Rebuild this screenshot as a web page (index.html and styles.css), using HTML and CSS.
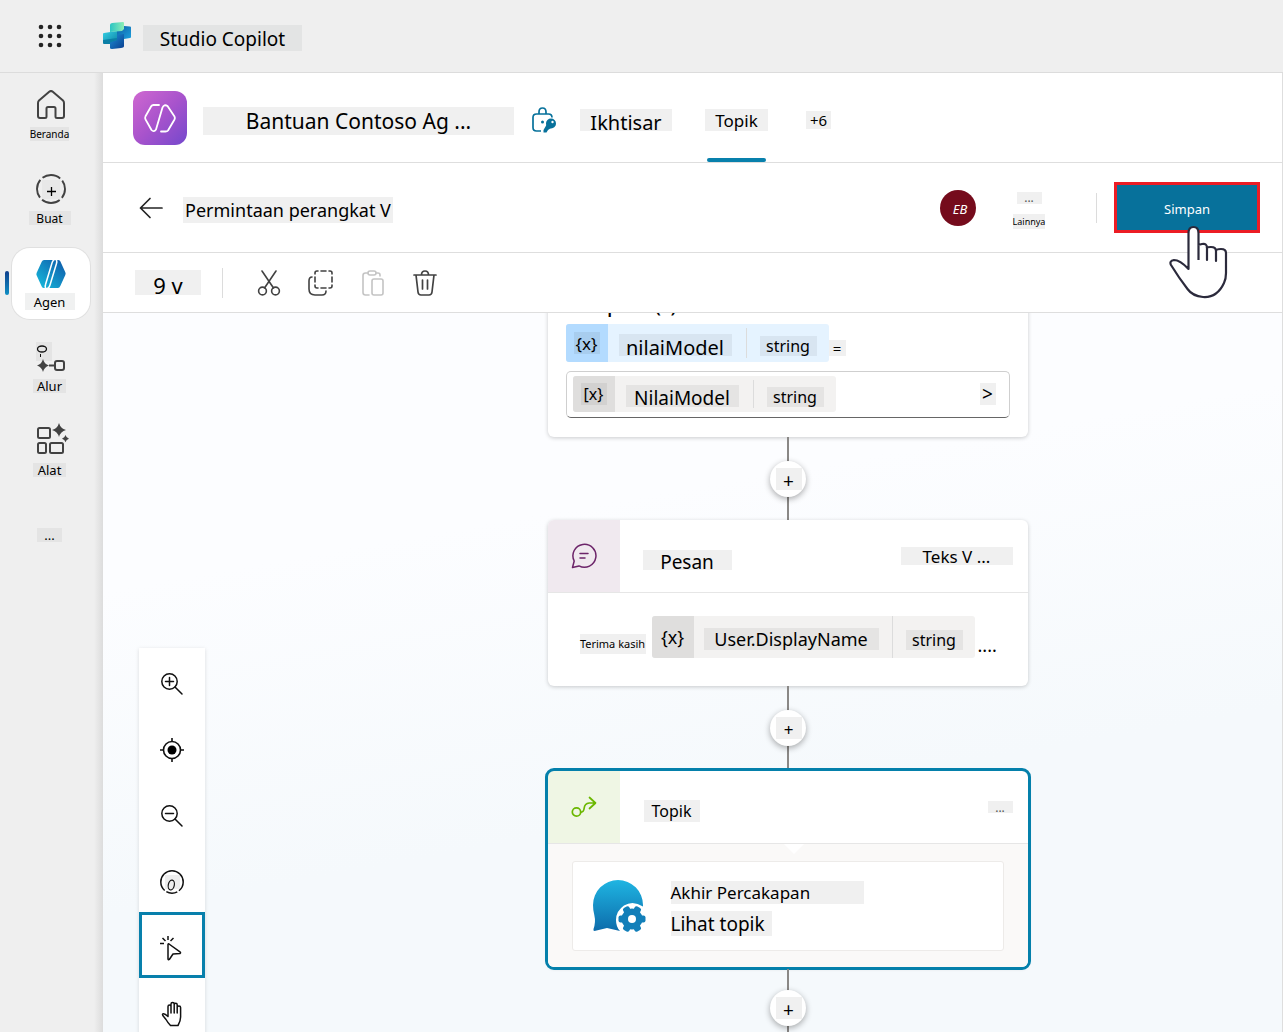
FILE: index.html
```html
<!DOCTYPE html>
<html lang="id">
<head>
<meta charset="utf-8">
<meta name="viewport" content="width=device-width, initial-scale=1">
<title>Studio Copilot</title>
<link rel="stylesheet" href="styles.css">
</head>
<body>
<div class="app">
  <header class="topbar">
    <button class="icon-button" type="button" aria-label="Peluncur aplikasi">
      <svg width="24" height="24" viewBox="0 0 24 24" fill="#242424"><circle cx="3" cy="3" r="2.3"/><circle cx="12" cy="3" r="2.3"/><circle cx="21" cy="3" r="2.3"/><circle cx="3" cy="12" r="2.3"/><circle cx="12" cy="12" r="2.3"/><circle cx="21" cy="12" r="2.3"/><circle cx="3" cy="21" r="2.3"/><circle cx="12" cy="21" r="2.3"/><circle cx="21" cy="21" r="2.3"/></svg>
    </button>
    <svg class="logo" width="30" height="28" viewBox="0 0 30 28" aria-hidden="true">
      <defs>
        <linearGradient id="lg1" x1="0" y1="0" x2="1" y2="0"><stop offset="0" stop-color="#2bc4c4"/><stop offset="1" stop-color="#8deeb4"/></linearGradient>
        <linearGradient id="lg2" x1="0" y1="0" x2="1" y2="1"><stop offset="0" stop-color="#0f5fa8"/><stop offset="1" stop-color="#1da0dc"/></linearGradient>
        <linearGradient id="lg3" x1="0" y1="0" x2="1" y2="1"><stop offset="0" stop-color="#1c8fd6"/><stop offset="1" stop-color="#0a3e8f"/></linearGradient>
        <linearGradient id="lg4" x1="0" y1="0" x2="1" y2="1"><stop offset="0" stop-color="#35d0e4"/><stop offset="1" stop-color="#0e86a8"/></linearGradient>
      </defs>
      <path d="M15 6l7-2 6 .5q1 0 1 1V15q0 1-1 1l-6 1h-7z" fill="url(#lg2)"/>
      <path d="M8 18l7-5 7-1v12q0 1-1 1.500l-2 .5-9 1q-2 0-2-1z" fill="url(#lg3)"/>
      <path d="M1 12q0-1 1-1l13-2v9l-7 2-6 1q-1 0-1-1z" fill="url(#lg4)"/>
      <path d="M1 18l14-2v2l-7 2.500v1.500l-6 0q-1 0-1-1z" fill="#0b7fa6"/>
      <path d="M8 3q0-1.500 2-2L21 0q1 0 1 1v6l-2 2-12 1z" fill="url(#lg1)"/>
    </svg>
    <h1 class="chip product t19">Studio Copilot</h1>
  </header>

  <div class="workspace">
    <nav class="rail" aria-label="Utama">
      <a class="rail-item" href="#beranda">
        <svg width="32" height="32" viewBox="0 0 32 32" fill="none" stroke="#424242" stroke-width="2" stroke-linejoin="round"><path d="M3 13q0-1.500 1-2.500L14.500 1.600q1.500-1.200 3 0L28 10.500q1 1 1 2.500v13q0 2-2 2h-5q-1.500 0-1.500-1.500v-8q0-1.500-1.500-1.500h-6q-1.500 0-1.500 1.500v8Q11.500 28 10 28H5q-2 0-2-2z"/></svg>
        <span class="chip t10">Beranda</span>
      </a>
      <a class="rail-item" href="#buat">
        <svg width="32" height="32" viewBox="0 0 32 32" fill="none" stroke="#424242"><path d="M7 6h18v19H7z" fill="#e8e8e8" stroke="none"/><circle cx="16" cy="15" r="14" stroke-width="1.900" stroke-dasharray="19 3" stroke-dashoffset="9.500"/><path d="M12 17.500h9M16.500 13v9" stroke="#000" stroke-width="1.300"/></svg>
        <span class="chip wide t12">Buat</span>
      </a>
      <a class="rail-item active" href="#agen" aria-current="page">
        <svg width="32" height="32" viewBox="0 0 32 32"><defs><linearGradient id="ag" x1="1" y1="0" x2="0" y2="1"><stop offset="0" stop-color="#0f57a8"/><stop offset="1" stop-color="#16bede"/></linearGradient></defs><path d="M9 2h14q1.500 0 2.300 1.300l5 11q.7 1.200 0 2.700l-5 11Q24.500 30 23 30H9q-1.500 0-2.300-1.600l-5-11q-.7-1.200 0-2.700l5-11Q7.500 2 9 2z" fill="url(#ag)"/><path d="M11.500 31q-2-1.500-1-4.500L17 5q1.200-4 4.500-4M20.500 1q2 1.500 1 4.500L15 27q-1.200 4-4.500 4" fill="none" stroke="#fff" stroke-width="1.500"/></svg>
        <span class="chip wider t13">Agen</span>
      </a>
      <a class="rail-item" href="#alur">
        <svg width="32" height="32" viewBox="0 0 32 32"><path d="M1 0h16v19H1z" fill="#e4e4e4"/><ellipse cx="7" cy="7" rx="4.500" ry="3" fill="none" stroke="#111" stroke-width="1.300"/><path d="M5.500 12v3" stroke="#111"/><path d="M8 17q1.200 5 6 6.500-4.800 1.500-6 6.500-1.200-5-6-6.500 4.800-1.500 6-6.500z" fill="#424242"/><path d="M14 23.500h6" stroke="#424242" stroke-width="2"/><rect x="20" y="19" width="9" height="9" rx="2" fill="none" stroke="#424242" stroke-width="2"/></svg>
        <span class="chip t13">Alur</span>
      </a>
      <a class="rail-item" href="#alat">
        <svg width="32" height="32" viewBox="0 0 32 32" fill="none" stroke="#424242" stroke-width="2" overflow="visible"><rect x="3" y="2" width="12" height="10" rx="1.500"/><rect x="3" y="17" width="8" height="10" rx="1.500"/><rect x="15" y="17" width="13" height="10" rx="1.500"/><path d="M24-3q1.500 5.500 7 7-5.500 1.500-7 7-1.500-5.500-7-7 5.500-1.500 7-7zM30.500 9q.7 2.800 3.500 3.700-2.800.8-3.500 3.600-.7-2.800-3.500-3.600 2.800-.9 3.500-3.700z" fill="#424242" stroke="none"/></svg>
        <span class="chip t13">Alat</span>
      </a>
      <button class="rail-item more" type="button" aria-label="Lainnya"><span class="chip t13">...</span></button>
    </nav>

    <main class="main">
      <div class="agent-header">
        <svg class="agent-icon" width="54" height="54" viewBox="0 0 54 54" aria-hidden="true"><defs><linearGradient id="pu" x1="0" y1="0" x2="1" y2="1"><stop offset="0" stop-color="#cf68d0"/><stop offset=".5" stop-color="#a853cc"/><stop offset="1" stop-color="#7448cc"/></linearGradient></defs><rect width="54" height="54" rx="12" fill="url(#pu)"/><g fill="none" stroke="#fff" stroke-width="1.800" stroke-linecap="round" stroke-linejoin="round"><path d="M26 14h-5.500q-1.500 0-2.300 1.300l-5.700 10q-.8 1.500 0 3L18.500 39q2.300 2.600 4.500-.5l6.500-22q1.600-3.500 5-1.500l7 10.500q.8 1.500 0 3L35 39.500q-.8 1-2.500 1H28"/></g></svg>
        <h2 class="chip agent-name t21">Bantuan Contoso Ag ...</h2>
        <svg class="lock" width="26" height="28" viewBox="0 0 26 28" fill="none" stroke="#07719b" stroke-width="1.700"><path d="M8 8V6q0-4 3.500-4T15 6v2M10 25H5.500Q2 25 2 21.500v-10Q2 8 5.500 8h12Q21 8 21 11.500"/><circle cx="11.500" cy="16" r="1.500" fill="#07719b" stroke="none"/><g fill="#07719b" stroke="none"><circle cx="20" cy="17.500" r="5"/><path d="M16 18l4 4-3 2-1.500 2.500h-3V24z"/></g><circle cx="21.500" cy="16" r="1.200" fill="#fff" stroke="none"/></svg>
        <nav class="tabs" aria-label="Agen">
          <a class="tab first" href="#ikhtisar"><span class="chip overview t20 low">Ikhtisar</span></a>
          <a class="tab selected" href="#topik" aria-current="page"><span class="chip t17">Topik</span></a>
          <a class="tab last" href="#lagi"><span class="chip t15">+6</span></a>
        </nav>
      </div>

      <div class="topic-header">
        <button class="icon-button back" type="button" aria-label="Kembali"><svg width="24" height="22" viewBox="0 0 24 22" fill="none" stroke="#242424" stroke-width="1.700" stroke-linecap="round" stroke-linejoin="round"><path d="M23 11H1.500M11 1.500L1.500 11l9.500 9.500"/></svg></button>
        <h3 class="chip topic-name t18">Permintaan perangkat V</h3>
        <span class="avatar">EB</span>
        <button class="more-menu" type="button"><span class="chip dots">...</span><span class="chip t9">Lainnya</span></button>
        <span class="divider"></span>
        <div class="save-wrap">
          <button class="save" type="button">Simpan</button>
          <svg class="pointer" width="60" height="74" viewBox="0 0 60 74" aria-hidden="true"><path d="M19.500 44V8Q20 2 24.500 2T29 8v27V22q0-3 4-3t5 4v12V24q0-2.500 4-2.500t5 4V36v-9q0-3 4.500-3t5 4.500V48q0 13-7 18-14 9-26 0Q10 53 2 40q-2-4 3-5 6 0 14.500 9z" fill="#fff"/><path d="M29.500 35V8q0-6-5-6t-5 6v36Q11 35 5 35q-5 1-3 5 8 13 16.500 24 5 7 15.500 8 14 1 21-14 2-4 2-10V28q0-4-5-4t-5 2v10-10q0-4-5-4t-4 1v12-12q0-5-5-4l-4 1" fill="none" stroke="#2b2a3c" stroke-width="2.200" stroke-linejoin="round"/></svg>
        </div>
      </div>

      <div class="toolbar">
        <span class="chip count t22 low">9 v</span>
        <span class="divider"></span>
        <button class="icon-button" type="button" aria-label="Potong"><svg width="28" height="28" viewBox="0 0 28 28" fill="none" stroke="#424242" stroke-width="1.600" stroke-linecap="round"><path d="M7 2l11.500 17M21 2L9.500 19"/><circle cx="7.500" cy="22" r="3.900"/><circle cx="20.500" cy="22" r="3.900"/></svg></button>
        <button class="icon-button" type="button" aria-label="Salin"><svg width="28" height="28" viewBox="0 0 28 28" fill="none" stroke="#424242" stroke-width="1.600" stroke-linecap="round"><path d="M8 5V4q0-2 2-2h1M14 2h5M22 2h1q2 0 2 2v1M25 8v5M25 16v1q0 2-2 2h-1M19 19h-5M11 19h-1q-2 0-2-2v-1M8 13V8M5 8q-3 0-3 4v8q0 6 6 6h7q4 0 4-4"/></svg></button>
        <button class="icon-button" type="button" aria-label="Tempel" disabled><svg width="28" height="28" viewBox="0 0 28 28" fill="none" stroke="#c4c4c4" stroke-width="1.600" stroke-linecap="round"><path d="M9 4H6.500Q4 4 4 6.500v17Q4 26 6.500 26H10M17 4h2q2 0 2 2v1"/><rect x="9" y="2" width="8" height="4" rx="2"/><rect x="13" y="10" width="11" height="16" rx="2"/></svg></button>
        <button class="icon-button" type="button" aria-label="Hapus"><svg width="28" height="28" viewBox="0 0 28 28" fill="none" stroke="#424242" stroke-width="1.700" stroke-linecap="round"><path d="M3 6h22M10.500 6q0-4 3.500-4t3.500 4M5 6l2 17q.4 3 3 3h8q2.600 0 3-3l2-17M11.500 11v9M16.500 11v9"/></svg></button>
      </div>

      <div class="canvas">
        <div class="zoombar" role="toolbar" aria-label="Kanvas">
          <button type="button" aria-label="Perbesar"><svg width="24" height="24" viewBox="0 0 24 24" fill="none" stroke="#111" stroke-width="1.500" stroke-linecap="round"><circle cx="9.500" cy="9.500" r="7.700"/><path d="M15 15l7 7M5.500 9.500h8M9.500 5.500v8"/></svg></button>
          <button type="button" aria-label="Pusatkan"><svg width="24" height="24" viewBox="0 0 24 24" fill="none" stroke="#111" stroke-width="1.600"><circle cx="12" cy="12" r="8.500"/><circle cx="12" cy="12" r="4.500" fill="#000" stroke="none"/><path d="M12 0v4M12 20v4M0 12h4M20 12h4"/></svg></button>
          <button type="button" aria-label="Perkecil"><svg width="24" height="24" viewBox="0 0 24 24" fill="none" stroke="#111" stroke-width="1.500" stroke-linecap="round"><circle cx="9.500" cy="9.500" r="7.700"/><path d="M15 15l7 7M5.500 9.500h8"/></svg></button>
          <button type="button" aria-label="Atur ulang"><svg width="24" height="24" viewBox="0 0 24 24" fill="none" stroke="#111" stroke-width="1.500"><path d="M5 5h15v14H5z" fill="#ededed" stroke="none"/><circle cx="12" cy="12" r="11.200" stroke-dasharray="10 2 11.400 2 45"/><ellipse cx="11.300" cy="15" rx="3" ry="5" stroke-width="1.200" transform="rotate(12 11 15)"/></svg></button>
          <button class="picked" type="button" aria-label="Pilih" aria-pressed="true"><svg width="24" height="26" viewBox="0 0 24 26" fill="none" stroke="#111" stroke-width="1.500" stroke-linejoin="round"><path d="M8 9.500v14.500q.3 1.300 1.300.5L13 19l7-.5q1-.5.300-1.300L9 9q-1-.5-1 .5zM8 1v4M2.500 3l3 3M13.500 3l-3 3M0 8.500h4"/></svg></button>
          <button type="button" aria-label="Geser"><svg width="24" height="26" viewBox="0 0 24 26" fill="none" stroke="#111" stroke-width="1.500" stroke-linecap="round" stroke-linejoin="round"><path d="M8 15V5.500Q8 4 9.500 4T11 5.500V12M11 12V3q0-1.500 1.600-1.500T14.200 3v9M14.200 12V3.800q0-1.500 1.500-1.500t1.500 1.500V12M17.200 12V6.500q0-1.500 1.700-1.500t1.700 1.500V16q0 4-2.600 8.500h-7.500Q8 22 6 18.500L2.800 14.500q-.8-1.500.7-1.700Q5 12.700 8 15.500"/></svg></button>
        </div>

        <div class="flow">
          <section class="card variable-card">
            <h4 class="cut-title">Inputs (s)</h4>
            <div class="variable-row">
              <span class="pill blue"><span class="pill-icon"><span class="chip t17">{x}</span></span><span class="pill-name"><span class="chip var-name t20 low">nilaiModel</span></span><span class="pill-type"><span class="chip t16">string</span></span></span><span class="chip equals t15">=</span>
            </div>
            <div class="value-field">
              <span class="pill"><span class="pill-icon"><span class="chip t16">[x}</span></span><span class="pill-name"><span class="chip var-name t19 low">NilaiModel</span></span><span class="pill-type"><span class="chip t16">string</span></span></span>
              <button class="chip expand t19" type="button">&gt;</button>
            </div>
          </section>
          <div class="connector"><button type="button" aria-label="Tambah simpul"><span class="chip t19">+</span></button></div>

          <section class="card">
            <div class="card-head">
              <span class="card-icon purple"><svg width="26" height="26" viewBox="0 0 26 26" fill="none" stroke="#6c2469" stroke-width="1.500" stroke-linecap="round" stroke-linejoin="round"><path d="M1.500 24.500L3.200 18A11.500 11.500 0 1 1 8 22.900zM9 10.500h8M9 15h5"/></svg></span>
              <h4 class="chip message-title t19 low">Pesan</h4>
              <button class="chip text-menu t17" type="button">Teks V ...</button>
            </div>
            <div class="message-body">
              <span class="chip thanks t11">Terima kasih</span>
              <span class="pill tall"><span class="pill-icon t18">{x}</span><span class="pill-name"><span class="chip user-name t18">User.DisplayName</span></span><span class="pill-type"><span class="chip t16">string</span></span></span><span class="trail t18">....</span>
            </div>
          </section>
          <div class="connector"><button type="button" aria-label="Tambah simpul"><span class="chip t17">+</span></button></div>

          <section class="card chosen">
            <div class="card-head">
              <span class="card-icon green"><svg width="26" height="22" viewBox="0 0 26 22" fill="none" stroke="#6bb700" stroke-width="1.700" stroke-linecap="round" stroke-linejoin="round"><circle cx="5.500" cy="16" r="4.200"/><path d="M9.700 16q3 .5 3.500-4t5-5H24M18.500 1.500L24.500 7 18.500 12.500"/></svg></span>
              <h4 class="chip topic-title t16">Topik</h4>
              <button class="chip dots push" type="button">...</button>
            </div>
            <div class="topic-body">
              <div class="topic-tile">
                <svg width="54" height="54" viewBox="0 0 54 54" aria-hidden="true"><defs><linearGradient id="bl" x1="0" y1="0" x2="0" y2="1"><stop offset="0" stop-color="#1fb5e2"/><stop offset="1" stop-color="#0d6cab"/></linearGradient></defs><path d="M1.500 52q-1.500 0-1-2 2.500-7 .8-14Q0 31 0 26a25 25 0 0 1 50 0v1.500Q40 21 31 26.500 23 32 23 41q0 7 4 11l-13-3z" fill="url(#bl)"/><g fill="#127fb9"><circle cx="39" cy="40" r="10.500"/><rect x="35.500" y="26.500" width="7" height="27" rx="2" transform="rotate(30 39 40)"/><rect x="35.500" y="26.500" width="7" height="27" rx="2" transform="rotate(90 39 40)"/><rect x="35.500" y="26.500" width="7" height="27" rx="2" transform="rotate(150 39 40)"/></g><circle cx="39" cy="40" r="4" fill="#fff"/></svg>
                <div class="topic-text"><span class="chip end-name t17">Akhir Percakapan</span><a class="chip view-link t19" href="#lihat">Lihat topik</a></div>
              </div>
            </div>
          </section>
          <div class="connector short"><button type="button" aria-label="Tambah simpul"><span class="chip t19">+</span></button></div>
        </div>
      </div>
    </main>
  </div>
</div>
</body>
</html>
```

FILE: styles.css
```css
* { box-sizing: border-box; }

body {
  margin: 0;
  font-family: "Noto Sans", "Open Sans", sans-serif;
  color: #000;
  background: #efefef;
}

h1, h2, h3, h4 { margin: 0; font-weight: 400; }
a { color: inherit; text-decoration: none; }
button { border: 0; padding: 0; background: none; font: inherit; color: inherit; }
svg { display: block; flex: none; }

.t9 { font-size: 9px; }
.t10 { font-size: 10px; }
.t11 { font-size: 11px; }
.t12 { font-size: 12px; }
.t13 { font-size: 13px; }
.t15 { font-size: 15px; }
.t16 { font-size: 16px; }
.t17 { font-size: 17px; }
.t18 { font-size: 18px; }
.t19 { font-size: 19px; }
.t20 { font-size: 20px; }
.t21 { font-size: 21px; }
.t22 { font-size: 22px; }

/* Tinted label used throughout */
.chip {
  display: inline-flex;
  flex: none;
  align-items: center;
  justify-content: center;
  height: 22px;
  background: #f0f0f0;
  white-space: nowrap;
}
.chip.low { padding-top: 4px; }

.app { display: flex; flex-direction: column; height: 100vh; overflow: hidden; }

.topbar {
  display: flex;
  flex: none;
  align-items: center;
  height: 73px;
  padding-left: 38px;
  border-bottom: 1px solid #dcdcdc;
}
.icon-button { display: flex; align-items: center; justify-content: center; }
.logo { margin: 0 11px 0 40px; }
.product { width: 159px; height: 26px; margin-top: 4px; padding-top: 2px; background: #e3e4e4; }

.workspace { display: flex; flex: 1; min-height: 0; }

.rail {
  display: flex;
  flex: none;
  flex-direction: column;
  gap: 13px;
  width: 103px;
  padding: 7px 13px 0 12px;
  background: linear-gradient(to right, #efefef 94px, #dcdcdc);
}
.rail-item {
  position: relative;
  display: flex;
  flex: none;
  flex-direction: column;
  align-items: center;
  gap: 5px;
  height: 71px;
  padding: 10px 3px 0 0;
  border-radius: 18px;
}
.rail-item svg { margin-left: 2px; }
.rail-item .chip { height: 14px; min-width: 33px; background: #e4e4e4; }
.rail-item .wide { min-width: 42px; }
.rail-item .wider { min-width: 50px; height: 17px; margin-top: -2px; background: #f0f1f1; }
.rail-item.active { background: #fff; box-shadow: 0 0 0 1px #e0e0e0; }
.rail-item.active::before {
  content: "";
  position: absolute;
  left: -7px;
  top: 23px;
  width: 4px;
  height: 24px;
  border-radius: 2px;
  background: linear-gradient(#0f3f8c, #0f8fc4);
}
.rail-item.more { padding-top: 28px; }
.rail-item.more .chip { min-width: 25px; }

.main {
  display: flex;
  flex: 1;
  flex-direction: column;
  min-width: 0;
  background: #fff;
  border-right: 1px solid #dedede;
}

.agent-header {
  display: flex;
  flex: none;
  align-items: center;
  height: 90px;
  padding-left: 30px;
  border-bottom: 1px solid #dedede;
}
.agent-name { width: 311px; height: 28px; margin: 6px 17px 0 16px; }
.lock { margin-top: 4px; }
.tabs { display: flex; align-self: stretch; }
.tab { display: flex; align-items: center; padding-top: 5px; }
.tab.first { margin: 0 33px 0 23px; }
.tab.last { margin-left: 38px; }
.tab.last .chip { height: 18px; width: 25px; }
.overview { width: 92px; }
.tab.selected { position: relative; }
.tab.selected .chip { width: 63px; }
.tab.selected::after {
  content: "";
  position: absolute;
  left: 2px;
  right: 2px;
  bottom: 0;
  height: 4px;
  border-radius: 2px;
  background: #0880ac;
}

.topic-header {
  display: flex;
  flex: none;
  align-items: center;
  height: 90px;
  padding: 0 22px 0 36px;
  border-bottom: 1px solid #dedede;
}
.topic-name { width: 210px; height: 26px; margin: 4px auto 0 20px; }
.avatar {
  display: flex;
  align-items: center;
  justify-content: center;
  width: 36px;
  height: 36px;
  padding: 2px 0 0 4px;
  border-radius: 50%;
  background: #750b1c;
  color: #fff;
  font-size: 13px;
  font-style: italic;
}
.more-menu {
  display: flex;
  flex-direction: column;
  align-items: center;
  gap: 10px;
  width: 36px;
  margin: 5px 49px 0 35px;
}
.more-menu .t9 { height: 15px; }
.chip.dots { width: 25px; height: 12px; font-size: 12px; color: #555; }
.divider { flex: none; width: 1px; height: 30px; background: #dcdcdc; }
.save-wrap { position: relative; margin-left: 17px; }
.save {
  display: block;
  width: 146px;
  height: 51px;
  padding-top: 3px;
  border: 3px solid #ec1c24;
  background: #07719b;
  color: #fff;
  font-size: 13px;
}
.pointer { position: absolute; left: 55px; top: 43px; z-index: 2; }

.toolbar {
  display: flex;
  flex: none;
  align-items: center;
  height: 60px;
  padding-left: 32px;
  border-bottom: 1px solid #dedede;
}
.count { width: 66px; height: 25px; margin-right: 21px; }
.toolbar .icon-button { margin-left: 24px; }
.toolbar .divider + .icon-button { margin-left: 32px; }

.canvas {
  display: flex;
  flex: 1;
  align-items: flex-start;
  min-height: 0;
  overflow: hidden;
  background: linear-gradient(170deg, #fcfdff 30%, #f5f9fc 65%);
}

.zoombar {
  flex: none;
  width: 66px;
  margin: 335px 88px 0 36px;
  background: #fff;
  box-shadow: 0 1px 4px #0002;
}
.zoombar button {
  display: flex;
  align-items: center;
  justify-content: center;
  width: 66px;
  height: 66px;
  padding-top: 6px;
}
.zoombar .picked { border: 3px solid #0880ac; }

.flow { display: flex; flex: 1; flex-direction: column; align-items: center; }

.card {
  width: 480px;
  border-radius: 6px;
  background: #fff;
  box-shadow: 0 1px 4px #0003;
}
.card-head { display: flex; align-items: center; height: 73px; padding-right: 15px; border-bottom: 1px solid #e6e6e6; }
.card-icon {
  display: flex;
  align-items: center;
  justify-content: center;
  align-self: stretch;
  width: 72px;
}
.purple { background: #f0e9ef; border-radius: 6px 0 0 0; }
.green { background: #eff6e4; border-radius: 6px 0 0 0; }

.variable-card { margin-top: -22px; padding: 0 18px 19px; }
.cut-title { height: 33px; padding-left: 22px; font-size: 20px; line-height: 27px; font-weight: 500; }
.variable-row { display: flex; align-items: center; margin-bottom: 9px; }
.pill { display: inline-flex; flex: none; height: 38px; border-radius: 3px; background: #f3f2f1; }
.pill .chip { background: #e5e4e3; }
.pill-icon {
  display: flex;
  align-items: center;
  justify-content: center;
  width: 42px;
  border-radius: 3px 0 0 3px;
  background: #dfdedd;
}
.pill-icon .chip { width: 26px; background: #d2d1d0; }
.pill-name { display: flex; align-items: center; margin: 4px 0; padding: 4px 14px 0 11px; border-right: 1px solid #dcdcdc; }
.pill-type { display: flex; align-items: center; padding: 6px 12px 0 13px; }
.pill-type .chip { min-width: 57px; height: 20px; }
.var-name { width: 113px; }
.pill.blue { background: #e5f3ff; }
.pill.blue .pill-icon { background: #b3dbff; }
.pill.blue .chip { background: #d8e5f1; }
.pill.blue .pill-icon .chip { background: #a8cdee; }
.equals { width: 17px; height: 16px; margin-top: 10px; }

.value-field {
  display: flex;
  align-items: center;
  justify-content: space-between;
  height: 47px;
  padding: 0 13px 2px 6px;
  border: 1px solid #cfcfcf;
  border-bottom-color: #666;
  border-radius: 5px;
}
.value-field .pill { height: 36px; }
.expand { width: 16px; }

.connector {
  display: flex;
  align-items: center;
  justify-content: center;
  width: 40px;
  height: 83px;
  background: linear-gradient(#8a8886, #8a8886) center / 2px 100% no-repeat;
}
.connector.short { height: 77px; }
.connector button {
  display: flex;
  align-items: center;
  justify-content: center;
  width: 36px;
  height: 36px;
  border-radius: 50%;
  background: #fff;
  box-shadow: 0 2px 6px #0005;
}
.connector .chip { width: 26px; margin-left: 2px; padding-top: 4px; }

.message-title { width: 89px; height: 20px; margin: 8px 0 0 23px; }
.text-menu { width: 112px; height: 18px; margin-left: auto; }
.message-body { display: flex; align-items: center; height: 93px; padding: 0 0 6px 32px; }
.thanks { width: 66px; height: 20px; margin: 14px 6px 0 0; }
.pill.tall { height: 42px; }
.tall .pill-name { margin: 0; padding: 4px 13px 0 10px; }
.user-name { width: 175px; }
.trail { margin: 16px 0 0 3px; }

.chosen { outline: 3px solid #0480ab; margin: 2px 0; }
.topic-title { width: 56px; margin: 8px 0 0 24px; }
.push { margin-left: auto; }
.topic-body { position: relative; padding: 17px 24px 16px; border-radius: 0 0 6px 6px; background: #faf9f8; }
.topic-body::before {
  content: "";
  position: absolute;
  top: 0;
  left: calc(50% - 4px);
  border: 10px solid transparent;
  border-top-color: #fff;
  border-bottom: 0;
}
.topic-tile {
  display: flex;
  align-items: center;
  gap: 24px;
  height: 90px;
  padding-left: 20px;
  border: 1px solid #edebe9;
  border-radius: 3px;
  background: #fff;
}
.topic-text { display: flex; flex-direction: column; align-items: flex-start; gap: 7px; padding-top: 5px; }
.topic-text .chip { height: 25px; justify-content: flex-start; }
.topic-text .end-name { width: 193px; height: 23px; }
.view-link { width: 101px; }
```
